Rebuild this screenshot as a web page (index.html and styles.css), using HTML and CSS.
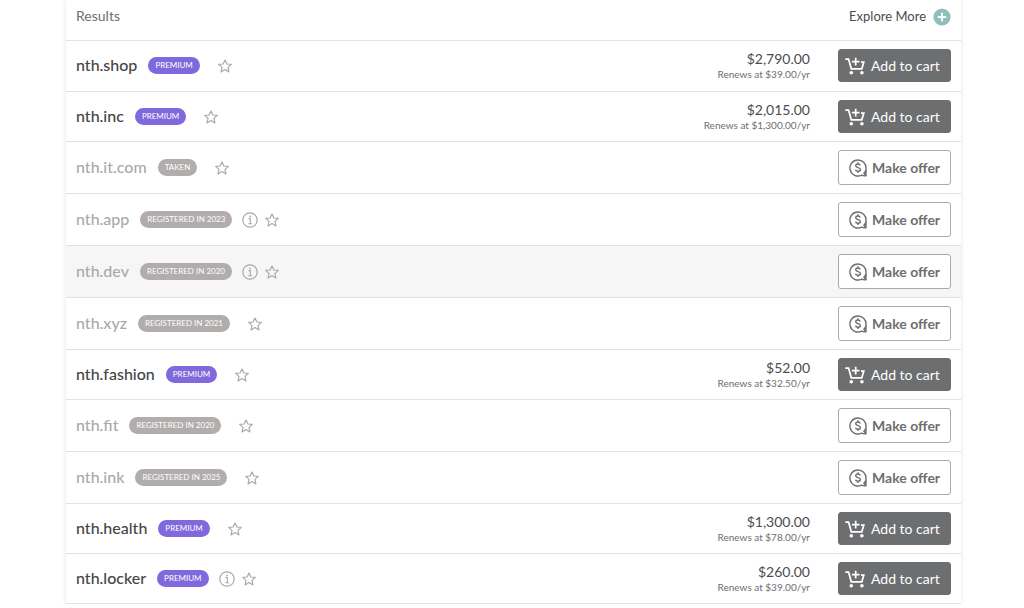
FILE: index.html
```html
<!DOCTYPE html>
<html lang="en">
<head>
    <meta charset="UTF-8">
    <title>Domain Search Results</title>
    <link rel="stylesheet" href="styles.css">
</head>
<body>
    <svg class="sprite" aria-hidden="true">
        <symbol id="icon-star" viewBox="0 0 14 14">
            <path d="M7 1 8.9 5 13.3 5.4 10 8.4 10.9 12.9 7 10.6 3.1 12.9 4 8.4 0.7 5.4 5.1 5Z" fill="none" stroke="currentColor" stroke-width="1.2" stroke-linejoin="round"/>
        </symbol>
        <symbol id="icon-info" viewBox="0 0 16 16">
            <circle cx="8" cy="8" r="7.2" fill="none" stroke="currentColor" stroke-width="1.2"/>
            <path d="M6.5 6.6H8.3V11.7M6.3 11.7H10.2" fill="none" stroke="currentColor" stroke-width="1.1"/>
            <circle cx="8.1" cy="4.4" r="0.9" fill="currentColor"/>
        </symbol>
        <symbol id="icon-cart" viewBox="0 0 20 18">
            <path d="M0.3 2.2H3.6L6.3 11.8H16.8L18.8 5.2H16M10.7 0.8V8.4M6.9 4.6H14.5" fill="none" stroke="currentColor" stroke-width="1.7"/>
            <circle cx="6.3" cy="15.8" r="1.8" fill="currentColor"/>
            <circle cx="16.9" cy="15.8" r="1.8" fill="currentColor"/>
        </symbol>
        <symbol id="icon-offer" viewBox="0 0 18 18">
            <path d="M9 1A8 8 0 1 0 12.6 16.1C13.9 16.8 15.4 17 17 16.7V9A8 8 0 0 0 9 1ZM17 10C16.9 11.8 16.2 13.1 14.9 14.3L16.9 16.6" fill="none" stroke="currentColor" stroke-width="1.4" stroke-linejoin="round"/>
            <path d="M11.3 6.5C10.9 5.4 10 5 8.9 5C7.6 5 6.7 5.7 6.7 6.8C6.7 9.2 11.4 8 11.4 10.5C11.4 11.6 10.3 12.3 9 12.3C7.7 12.3 6.8 11.8 6.5 10.7M9 3.3V5M9 12.3V14" fill="none" stroke="currentColor" stroke-width="1.4"/>
        </symbol>
        <symbol id="icon-plus" viewBox="0 0 18 18">
            <circle cx="9" cy="9" r="8.6" fill="#8fbfba"/>
            <path d="M9 4.8V13.2M4.8 9H13.2" stroke="#fff" stroke-width="2"/>
        </symbol>
    </svg>

    <main class="results">
        <header class="results-header">
            <h1>Results</h1>
            <a class="explore" href="#">Explore More
                <svg class="icon-plus"><use href="#icon-plus"/></svg>
            </a>
        </header>
        <ul class="domain-list" id="domain-list"></ul>
    </main>

    <script>
        const domains = [
            { name: 'nth.shop', label: 'Premium', price: '$2,790.00', renewal: '$39.00' },
            { name: 'nth.inc', label: 'Premium', price: '$2,015.00', renewal: '$1,300.00' },
            { name: 'nth.it.com', label: 'Taken' },
            { name: 'nth.app', label: 'Registered in 2023', info: true },
            { name: 'nth.dev', label: 'Registered in 2020', info: true, active: true },
            { name: 'nth.xyz', label: 'Registered in 2021' },
            { name: 'nth.fashion', label: 'Premium', price: '$52.00', renewal: '$32.50' },
            { name: 'nth.fit', label: 'Registered in 2020' },
            { name: 'nth.ink', label: 'Registered in 2025' },
            { name: 'nth.health', label: 'Premium', price: '$1,300.00', renewal: '$78.00' },
            { name: 'nth.locker', label: 'Premium', price: '$260.00', renewal: '$39.00', info: true }
        ];

        function renderPurchase(domain) {
            if (!domain.price) {
                return `<button class="btn btn-offer" type="button"><svg class="icon-offer"><use href="#icon-offer"/></svg>Make offer</button>`;
            }
            return `
                <div class="price">
                    <strong>${domain.price}</strong>
                    <small>Renews at ${domain.renewal}/yr</small>
                </div>
                <button class="btn btn-cart" type="button"><svg class="icon-cart"><use href="#icon-cart"/></svg>Add to cart</button>`;
        }

        function renderDomain(domain) {
            const info = domain.info
                ? `<button class="icon-button info" type="button" aria-label="About ${domain.name}"><svg class="icon-info"><use href="#icon-info"/></svg></button>`
                : '';

            return `
                <li class="domain ${domain.price ? 'available' : 'taken'} ${domain.active ? 'active' : ''}">
                    <h2>${domain.name}</h2>
                    <span class="badge">${domain.label}</span>
                    ${info}
                    <button class="icon-button star" type="button" aria-label="Save ${domain.name}"><svg class="icon-star"><use href="#icon-star"/></svg></button>
                    ${renderPurchase(domain)}
                </li>`;
        }

        document.getElementById('domain-list').innerHTML = domains.map(renderDomain).join('');
    </script>
</body>
</html>
```
FILE: styles.css
```css
* {
    box-sizing: border-box;
}

body {
    font-family: Lato, "Open Sans", sans-serif;
    margin: 0;
    background: #fff;
    color: #4c4c4c;
    overflow: hidden;
}

button {
    font-family: inherit;
    cursor: pointer;
}

.sprite {
    display: none;
}

.results {
    margin: 0 63px 0 66px;
    background: #fff;
    box-shadow: 0 0 4px rgba(0, 0, 0, 0.12);
}

.results-header {
    display: flex;
    justify-content: space-between;
    align-items: flex-start;
    padding: 6px 10px 14px;
}

.results-header h1 {
    margin: 0;
    font-size: 14px;
    font-weight: 400;
    line-height: 20px;
    color: #6d6e70;
}

.explore {
    display: flex;
    align-items: flex-end;
    gap: 7px;
    font-size: 13px;
    line-height: 20px;
    color: #4c4c4c;
    text-decoration: none;
}

.icon-plus {
    width: 18px;
    height: 18px;
}

.domain-list {
    list-style: none;
    margin: 0;
    padding: 0;
    border-bottom: 1px solid #e2e2e2;
}

.domain {
    display: flex;
    align-items: center;
    padding: 8px 10px;
    border-top: 1px solid #e2e2e2;
}

.domain:first-child {
    padding-bottom: 9px;
}

.domain.active {
    background: #f6f6f6;
}

.domain h2 {
    margin: 0;
    padding-bottom: 2px;
    font-size: 16px;
    font-weight: 500;
    line-height: 22px;
    color: #454545;
}

.domain.taken h2 {
    color: #aaa;
}

.badge {
    margin-left: 11px;
    padding: 0 7px;
    border-radius: 9px;
    background: #7f69dc;
    color: #fff;
    font-size: 8px;
    line-height: 17px;
    text-transform: uppercase;
}

.taken .badge {
    background: #b1adad;
}

.icon-button {
    display: flex;
    padding: 0;
    border: none;
    background: none;
    color: #a9a9a9;
}

.star {
    margin-left: 18px;
}

.info {
    margin-left: 10px;
}

.info + .star {
    margin-left: 7px;
}

.icon-star {
    width: 14px;
    height: 14px;
}

.icon-info {
    width: 16px;
    height: 16px;
}

.price {
    margin-left: auto;
    margin-right: 28px;
    text-align: right;
}

.price strong,
.price small {
    display: block;
    font-weight: 400;
}

.price strong {
    font-size: 14px;
    line-height: 16px;
}

.price small {
    font-size: 10px;
    line-height: 14px;
    color: #6d6e70;
}

.btn {
    display: flex;
    align-items: center;
    width: 113px;
    padding: 0;
    border: 1px solid #6d6e70;
    border-radius: 3px;
}

.btn-cart {
    height: 33px;
    padding-left: 6px;
    gap: 6px;
    background: #6d6e70;
    color: #fff;
    font-size: 14px;
}

.btn-offer {
    height: 35px;
    margin-left: auto;
    padding-left: 10px;
    gap: 5px;
    border-color: #aaa;
    background: #fff;
    color: #6d6e70;
    font-size: 14px;
    font-weight: 700;
}

.icon-cart {
    width: 20px;
    height: 18px;
}

.icon-offer {
    width: 18px;
    height: 18px;
}
```
